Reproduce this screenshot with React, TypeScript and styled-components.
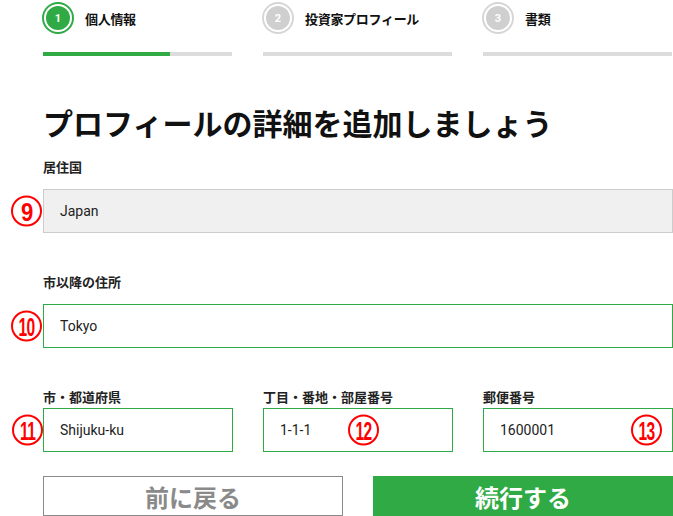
import React from "react";
import styled, { createGlobalStyle } from "styled-components";

const GlobalStyle = createGlobalStyle`
  html, body { margin: 0; padding: 0; background: #fff; }
  body { font-family: "Noto Sans CJK JP", "Noto Sans", sans-serif; color: #111; overflow: hidden; }
`;

const GREEN = "#2faa45";

const Page = styled.div`
  width: 630px;
  margin-left: 43px;
  display: flex;
  flex-direction: column;
`;

const Steps = styled.div`
  display: grid;
  grid-template-columns: repeat(3, 190px);
  column-gap: 30px;
  margin-left: -1px;
  padding-top: 2px;
`;

const Step = styled.div`
  display: flex;
  flex-direction: column;
`;

const StepHead = styled.div`
  display: flex;
  align-items: center;
  gap: 11px;
  height: 32px;
`;

const Circle = styled.div<{ $active?: boolean }>`
  width: 28px;
  height: 28px;
  border-radius: 50%;
  border: 2px solid ${(p) => (p.$active ? GREEN : "#d6d6d6")};
  display: flex;
  align-items: center;
  justify-content: center;
  flex: none;
`;

const Dot = styled.div<{ $active?: boolean }>`
  width: 24px;
  height: 24px;
  border-radius: 50%;
  background: ${(p) => (p.$active ? GREEN : "#cfcfcf")};
  color: #fff;
  font-family: "Roboto", sans-serif;
  font-weight: 700;
  font-size: 11px;
  display: flex;
  align-items: center;
  justify-content: center;
`;

const StepLabel = styled.span`
  font-size: 13px;
  font-weight: 700;
  color: #111;
  letter-spacing: -0.3px;
`;

const Track = styled.div`
  margin-top: 18px;
  margin-left: 1px;
  height: 4px;
  background: #dcdcdc;
`;

const Fill = styled.div`
  height: 100%;
  background: ${GREEN};
`;

const Title = styled.h1`
  margin: 48px 0 0 0;
  font-size: 30px;
  line-height: 36px;
  font-weight: 700;
  color: #111;
  letter-spacing: 0;
`;

const Label = styled.div`
  font-size: 13px;
  font-weight: 700;
  color: #222;
  line-height: 18px;
  margin-bottom: 13px;
`;

const Field = styled.div<{ $top: number }>`
  display: flex;
  flex-direction: column;
  margin-top: ${(p) => p.$top}px;
`;

const InputBox = styled.div<{ $disabled?: boolean }>`
  position: relative;
  height: 44px;
  box-sizing: border-box;
  border: 1px solid ${(p) => (p.$disabled ? "#cccccc" : GREEN)};
  background: ${(p) => (p.$disabled ? "#f0f0f0" : "#fff")};
  display: flex;
  align-items: center;
  padding-left: 16px;
  font-family: "Roboto", sans-serif;
  font-size: 14px;
  color: #222;
`;

const Row = styled.div`
  display: grid;
  grid-template-columns: repeat(3, 190px);
  column-gap: 30px;
  margin-top: 40px;
`;

const SmallField = styled.div`
  display: flex;
  flex-direction: column;
`;

const SmallLabel = styled(Label)`
  margin-bottom: 2px;
`;

const Badge = styled.span<{ $left: number }>`
  position: absolute;
  left: ${(p) => p.$left}px;
  top: 50%;
  transform: translateY(-50%);
  width: 31px;
  height: 31px;
  box-sizing: border-box;
  border-radius: 50%;
  border: 2px solid #ff0000;
  color: #ff0000;
  font-family: "Liberation Sans", sans-serif;
  font-weight: 700;
  font-size: 26px;
  line-height: 1;
  display: flex;
  align-items: center;
  justify-content: center;
`;

const Narrow = styled.span<{ $sx: number }>`
  display: inline-block;
  transform: scaleX(${(p) => p.$sx});
  letter-spacing: -1px;
  white-space: nowrap;
`;

const Buttons = styled.div`
  display: grid;
  grid-template-columns: 300px 300px;
  column-gap: 30px;
  margin-top: 24px;
`;

const Button = styled.button<{ $primary?: boolean }>`
  height: 40px;
  box-sizing: border-box;
  border: ${(p) => (p.$primary ? "none" : "1px solid #8a8a8a")};
  background: ${(p) => (p.$primary ? GREEN : "#fff")};
  color: ${(p) => (p.$primary ? "#fff" : "#8a8a8a")};
  font-family: "Noto Sans CJK JP", sans-serif;
  font-size: 24px;
  font-weight: 700;
  padding: 0;
  display: flex;
  align-items: center;
  justify-content: center;
`;

const steps = [
  { n: 1, label: "個人情報", active: true, fill: 127 },
  { n: 2, label: "投資家プロフィール", active: false, fill: 0 },
  { n: 3, label: "書類", active: false, fill: 0 },
];

function Mark({ n, left }: { n: number; left: number }) {
  return (
    <Badge $left={left}>
      <Narrow $sx={n < 10 ? 0.85 : 0.6}>{n}</Narrow>
    </Badge>
  );
}

export default function App() {
  return (
    <>
      <GlobalStyle />
      <Page>
        <Steps>
          {steps.map((s) => (
            <Step key={s.n}>
              <StepHead>
                <Circle $active={s.active}>
                  <Dot $active={s.active}>{s.n}</Dot>
                </Circle>
                <StepLabel>{s.label}</StepLabel>
              </StepHead>
              <Track>
                <Fill style={{ width: s.fill }} />
              </Track>
            </Step>
          ))}
        </Steps>
        <Title>プロフィールの詳細を追加しましょう</Title>
        <Field $top={18}>
          <Label>居住国</Label>
          <InputBox $disabled>
            Japan
            <Mark n={9} left={-33} />
          </InputBox>
        </Field>
        <Field $top={40}>
          <Label>市以降の住所</Label>
          <InputBox>
            Tokyo
            <Mark n={10} left={-33} />
          </InputBox>
        </Field>
        <Row>
          <SmallField>
            <SmallLabel>市・都道府県</SmallLabel>
            <InputBox>
              Shijuku-ku
              <Mark n={11} left={-32} />
            </InputBox>
          </SmallField>
          <SmallField>
            <SmallLabel>丁目・番地・部屋番号</SmallLabel>
            <InputBox>
              1-1-1
              <Mark n={12} left={84} />
            </InputBox>
          </SmallField>
          <SmallField>
            <SmallLabel>郵便番号</SmallLabel>
            <InputBox>
              1600001
              <Mark n={13} left={147} />
            </InputBox>
          </SmallField>
        </Row>
        <Buttons>
          <Button>前に戻る</Button>
          <Button $primary>続行する</Button>
        </Buttons>
      </Page>
    </>
  );
}
